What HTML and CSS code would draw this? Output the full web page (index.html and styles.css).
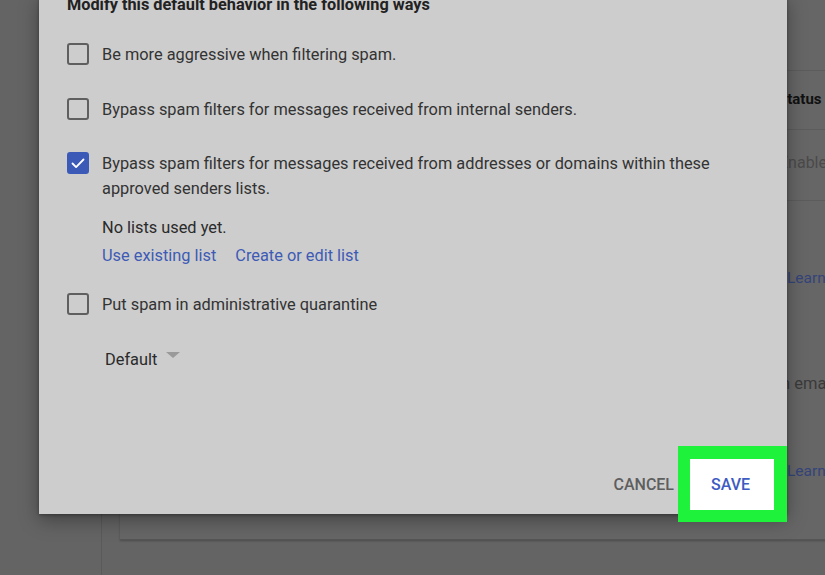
FILE: index.html
```html
<!DOCTYPE html>
<html lang="en">
<head>
    <meta charset="UTF-8">
    <meta name="viewport" content="width=device-width, initial-scale=1.0">
    <title>Spam settings</title>
    <link rel="stylesheet" href="styles.css">
</head>
<body>
    <div class="page">
        <div class="rail"></div>
        <div class="main">
            <div class="card">
                <div class="row row-top"></div>
                <div class="row row-head"><span class="cell status-head">Status</span></div>
                <div class="row row-enable"><span class="cell enabled">Enabled</span></div>
                <div class="row row-info">
                    <span class="cell learn learn-1">Learn more</span>
                    <span class="cell email">n email</span>
                    <span class="cell learn learn-2">Learn more</span>
                </div>
            </div>
        </div>
    </div>

    <div class="dialog">
        <h3 class="dialog-title">Modify this default behavior in the following ways</h3>

        <div class="options">
            <label class="option opt-1">
                <span class="checkbox"></span>
                <span class="label">Be more aggressive when filtering spam.</span>
            </label>
            <label class="option opt-2">
                <span class="checkbox"></span>
                <span class="label">Bypass spam filters for messages received from internal senders.</span>
            </label>
            <label class="option opt-3">
                <span class="checkbox checked">
                    <svg viewBox="0 0 22 22" width="22" height="22"><path d="M5.5 11.5l3.6 3.6 7.4-7.6" fill="none" stroke="#fff" stroke-width="1.8" stroke-linecap="round" stroke-linejoin="round"/></svg>
                </span>
                <span class="label">Bypass spam filters for messages received from addresses or domains within these approved senders lists.</span>
            </label>
            <div class="lists">
                <div class="no-lists">No lists used yet.</div>
                <div class="list-links">
                    <a class="link">Use existing list</a>
                    <a class="link">Create or edit list</a>
                </div>
            </div>
            <label class="option opt-4">
                <span class="checkbox"></span>
                <span class="label">Put spam in administrative quarantine</span>
            </label>
            <div class="select">
                <span>Default</span>
                <span class="caret"></span>
            </div>
        </div>

        <div class="footer">
            <button class="btn btn-cancel">CANCEL</button>
            <button class="btn btn-save">SAVE</button>
        </div>
    </div>
</body>
</html>
```

FILE: styles.css
```css
html, body {
    margin: 0;
    height: 100%;
}
body {
    background: #646464;
    font-family: Roboto, "Liberation Sans", Arial, sans-serif;
    overflow: hidden;
    position: relative;
}
.page {
    display: flex;
    height: 575px;
}
.rail {
    width: 101px;
    border-right: 1px solid #5a5a5a;
    flex-shrink: 0;
}
.main {
    flex: 1;
    padding-left: 18px;
}
.card {
    width: 820px;
    height: 539px;
    background: #666;
    border-bottom: 1px solid #555;
    box-shadow: 0 1px 2px rgba(0, 0, 0, 0.25);
    display: flex;
    flex-direction: column;
}
.row {
    border-bottom: 1px solid #5c5c5c;
    position: relative;
}
.row-top {
    height: 70px;
}
.row-head {
    height: 58px;
}
.row-enable {
    height: 70px;
}
.row-info {
    border-bottom: none;
    flex: 1;
}
.cell {
    position: absolute;
    left: 658px;
    white-space: nowrap;
}
.status-head {
    top: 19px;
    font-size: 15px;
    font-weight: 700;
    color: #111;
}
.enabled {
    top: 23px;
    left: 659px;
    font-size: 16px;
    color: #4a4a4a;
}
.learn {
    left: 667px;
    color: #34447a;
    font-size: 15.5px;
}
.learn-1 { top: 68px; }
.learn-2 { top: 261px; }
.email {
    top: 173px;
    left: 661px;
    font-size: 16.5px;
    color: #3a3a3a;
}

/* dialog */
.dialog {
    position: absolute;
    left: 39px;
    top: -5px;
    width: 748px;
    height: 519px;
    background: #cdcdcd;
    box-shadow: 0 6px 18px rgba(0, 0, 0, 0.35), 0 1px 3px rgba(0, 0, 0, 0.3);
    display: flex;
    flex-direction: column;
    padding-left: 28px;
    box-sizing: border-box;
}
.dialog-title {
    margin: 0;
    font-size: 16.3px;
    line-height: 20px;
    font-weight: 700;
    color: #222;
}
.options {
    display: flex;
    flex-direction: column;
    margin-top: 27px;
}
.option {
    display: flex;
    align-items: flex-start;
    gap: 13px;
}
.opt-2 { margin-top: 30px; }
.opt-3 { margin-top: 29px; }
.opt-4 { margin-top: 24px; }
.checkbox {
    width: 22px;
    height: 22px;
    box-sizing: border-box;
    border: 2.5px solid #5f5f5f;
    border-radius: 3px;
    flex-shrink: 0;
    margin-top: 1px;
}
.checkbox.checked {
    background: #3b5ab8;
    border-color: #3b5ab8;
    position: relative;
}
.checkbox.checked svg {
    position: absolute;
    left: -2.5px;
    top: -2.5px;
}
.label {
    font-size: 16.35px;
    line-height: 25px;
    color: #333;
    max-width: 630px;
}
.lists {
    padding-left: 35px;
    margin-top: 14px;
    font-size: 16.35px;
    line-height: 25px;
}
.no-lists {
    color: #2a2a2a;
}
.list-links {
    display: flex;
    gap: 19px;
    margin-top: 3px;
}
.link {
    color: #3d5bb6;
}
.select {
    display: flex;
    align-items: center;
    gap: 9px;
    margin-top: 30px;
    padding-left: 38px;
    font-size: 16.35px;
    line-height: 25px;
    color: #2a2a2a;
}
.caret {
    width: 0;
    height: 0;
    border-left: 7px solid transparent;
    border-right: 7px solid transparent;
    border-top: 6px solid #9a9a9a;
    margin-top: -10px;
}
.footer {
    margin-top: auto;
    height: 60px;
    display: flex;
    justify-content: flex-end;
    align-items: center;
}
.btn {
    font-family: Roboto, "Liberation Sans", Arial, sans-serif;
    font-size: 16px;
    font-weight: 500;
    background: none;
    border: none;
    padding: 0;
    cursor: pointer;
}
.btn-cancel {
    color: #5e5e5e;
    margin-right: 4px;
}
.btn-save {
    width: 109px;
    height: 76px;
    background: #fff;
    border: 12px solid #1ff23a;
    border-right-width: 13px;
    border-top-width: 13px;
    padding-right: 3px;
    color: #3d5bc2;
    box-sizing: border-box;
    position: relative;
    z-index: 1;
}
```
